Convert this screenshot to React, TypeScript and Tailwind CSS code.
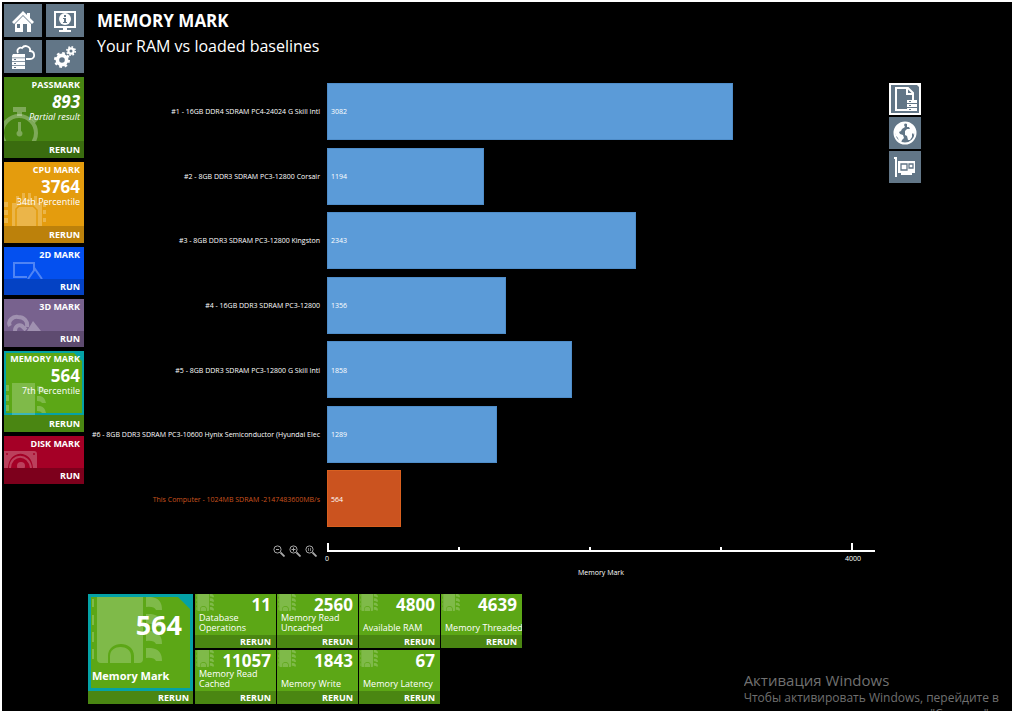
import type { ReactNode } from 'react';

const marks = [
  { title: 'PASSMARK', score: '893', note: 'Partial result', action: 'RERUN', bg: 'bg-[#478512]', foot: 'bg-[#3a6c0f]', icon: <StopwatchArt />, italic: true },
  { title: 'CPU MARK', score: '3764', note: '34th Percentile', action: 'RERUN', bg: 'bg-[#e49c0d]', foot: 'bg-[#bc810b]', icon: <CpuArt /> },
  { title: '2D MARK', action: 'RUN', bg: 'bg-[#0450ef]', foot: 'bg-[#0442c4]', icon: <Shapes2dArt /> },
  { title: '3D MARK', action: 'RUN', bg: 'bg-[#78628e]', foot: 'bg-[#5e4b70]', icon: <Shapes3dArt /> },
  { title: 'MEMORY MARK', score: '564', note: '7th Percentile', action: 'RERUN', bg: 'bg-[#5ca716]', foot: 'bg-[#4a8612]', icon: <MemoryArt />, selected: true },
  { title: 'DISK MARK', action: 'RUN', bg: 'bg-[#a50026]', foot: 'bg-[#7d001c]', icon: <DiskArt /> },
];

const baselines = [
  { label: '#1 - 16GB DDR4 SDRAM PC4-24024 G Skill Intl', value: 3082 },
  { label: '#2 - 8GB DDR3 SDRAM PC3-12800 Corsair', value: 1194 },
  { label: '#3 - 8GB DDR3 SDRAM PC3-12800 Kingston', value: 2343 },
  { label: '#4 - 16GB DDR3 SDRAM PC3-12800', value: 1356 },
  { label: '#5 - 8GB DDR3 SDRAM PC3-12800 G Skill Intl', value: 1858 },
  { label: '#6 - 8GB DDR3 SDRAM PC3-10600 Hynix Semiconductor (Hyundai Elec', value: 1289 },
  { label: 'This Computer - 1024MB SDRAM -2147483600MB/s', value: 564, own: true },
];

const AXIS_MAX = 4160;

const tests = [
  { name: 'Database\nOperations', score: '11' },
  { name: 'Memory Read\nUncached', score: '2560' },
  { name: 'Available RAM', score: '4800' },
  { name: 'Memory Threaded', score: '4639' },
  { name: 'Memory Read\nCached', score: '11057' },
  { name: 'Memory Write', score: '1843' },
  { name: 'Memory Latency', score: '67' },
];

function StopwatchArt() {
  return (
    <svg viewBox="0 0 36 34" className="absolute bottom-0 left-0 h-[34px] w-[36px] text-white/30">
      <path d="M9 0h13v5h-4v4h-5V5H9z" fill="currentColor" />
      <circle cx="15" cy="26" r="17" fill="none" stroke="currentColor" strokeWidth="4" />
      <path d="M27 12l3-3 4 4-3 3z" fill="currentColor" />
      <path d="M14 15h3v9a3 3 0 1 1-3 0z" fill="currentColor" />
    </svg>
  );
}

function CpuArt() {
  return (
    <svg viewBox="0 0 42 34" className="absolute bottom-0 left-0 h-[34px] w-[42px] text-white/25" fill="currentColor">
      <path d="M8 11h30v23H8zM12 4h3v7h-3zM18 1h3v10h-3zM24 1h3v10h-3zM30 4h3v7h-3zM0 10h4v5H0zM0 18h4v5H0zM0 26h4v5H0zM39 11h3v4h-3zM39 18h3v4h-3zM39 26h3v4h-3z" />
      <path d="M12 34V17l3-3h14l4 4v16" fill="none" stroke="#e49c0d" strokeWidth="1.500" />
    </svg>
  );
}

function Shapes2dArt() {
  return (
    <svg viewBox="0 0 36 17" className="absolute bottom-0 left-[4px] h-[17px] w-[36px] text-white/30" fill="none" stroke="currentColor" strokeWidth="2">
      <path d="M19 15H6V1h20v8M20 17l7-10 7 10" />
    </svg>
  );
}

function Shapes3dArt() {
  return (
    <svg viewBox="0 0 36 17" className="absolute bottom-0 left-[3px] h-[17px] w-[36px] text-white/30" fill="none" stroke="currentColor" strokeWidth="4">
      <path d="M3 12C0 7 6 2 11 3c6 0 10 4 9 10" />
      <path d="M8 17c0-5 4-7 7-5l4 4" />
      <path d="M26 7l8 10H20z" fill="currentColor" stroke="none" />
    </svg>
  );
}

function MemoryArt() {
  return (
    <svg viewBox="0 0 42 32" className="absolute bottom-0 left-0 h-8 w-[42px] text-white/22" fill="currentColor">
      <path d="M8 0h23v32H8zM2 2h3v6H2zM2 12h3v6H2zM2 22h3v6H2z" />
      <path d="M33 3h3q5 1 6 7h-4q-1-2-5-2zM33 13h3q5 1 6 7h-4q-1-2-5-2zM33 23h3q5 1 6 7h-4q-1-2-5-2z" />
    </svg>
  );
}

function DiskArt() {
  return (
    <svg viewBox="0 0 36 17" className="absolute bottom-0 left-0 h-[17px] w-[36px] text-white/25">
      <path d="M0 0h30q3 0 3 3v14h-4C28-2 5-2 4 17H0z" fill="currentColor" />
      <path d="M6 17C7 2 25 2 27 17" fill="none" stroke="currentColor" strokeWidth="2" />
      <circle cx="17" cy="15" r="4" fill="currentColor" />
      <circle cx="3" cy="3" r="1" fill="#a50026" />
      <circle cx="30" cy="3" r="1" fill="#a50026" />
    </svg>
  );
}

function ChipArt({ className }: { className: string }) {
  return (
    <svg viewBox="0 0 70 68" preserveAspectRatio="xMinYMin slice" className={`absolute text-white/22 ${className}`} fill="currentColor">
      <path d="M5 0h46v62q0 4-4 4h-5V59c0-16-26-16-26 0v7H9q-4 0-4-4z" />
      <path d="M18 66V59c0-12 21-12 21 0v7z" />
      <path d="M0 2h2v8H0zM0 18h2v10H0zM0 35h2v10H0zM0 52h2v10H0z" />
      <path d="M54 0h5q11 1 11 13h-6q-2-4-10-3zM54 17h5q11 1 11 13h-6q-2-4-10-3zM54 34h5q11 1 11 13h-6q-2-4-10-3zM54 51h5q11 1 11 13h-6q-2-4-10-3z" />
    </svg>
  );
}

function HomeIcon() {
  return (
    <svg viewBox="0 0 24 24" className="h-6 w-6" fill="#fff">
      <path d="M12 2L1 13l2 2 9-9 9 9 2-2-4-4V4h-3v2z" />
      <path d="M4 15l8-8 8 8v8h-4v-8h-4v8H4z" />
      <path d="M6 15h3v4H6z" fill="#627687" />
    </svg>
  );
}

function SystemIcon() {
  return (
    <svg viewBox="0 0 24 24" className="h-6 w-6" fill="#fff">
      <path d="M1 2h22v17H1zm2 2v13h18V4z" fillRule="evenodd" />
      <path d="M10 19h4v2h4v2H6v-2h4z" />
      <circle cx="12" cy="10" r="6" />
      <path d="M11 6h2v2h-2zM10 9h3v4h1v1h-4v-1h1v-3h-1z" fill="#627687" />
    </svg>
  );
}

function BaselineIcon() {
  return (
    <svg viewBox="0 0 24 24" className="h-6 w-6">
      <path d="M7 8C5 4 9 2 11 3c3-4 9-1 8 3 5 0 6 8 0 8h-4" fill="none" stroke="#fff" strokeWidth="1.800" />
      <path d="M2 9h12v15H1V11z" fill="#fff" />
      <path d="M1 12.500h13v.8H1zM1 16h13v.8H1zM1 20h13v.8H1zM3 14h2v1H3zM3 18h2v1H3zM3 22h2v1H3z" fill="#627687" />
    </svg>
  );
}

function GearsIcon() {
  return (
    <svg viewBox="0 0 24 24" className="h-6 w-6" fill="none" stroke="#fff">
      <circle cx="9" cy="15" r="4.600" strokeWidth="3.600" />
      <circle cx="9" cy="15" r="6.800" strokeWidth="2.400" strokeDasharray="2.670 2.670" />
      <circle cx="18" cy="6" r="2.600" strokeWidth="2.200" />
      <circle cx="18" cy="6" r="4.200" strokeWidth="1.600" strokeDasharray="1.650 1.650" />
    </svg>
  );
}

function BaselineFileIcon() {
  return (
    <svg viewBox="0 0 28 28" className="h-7 w-7">
      <path d="M16 25H5V3h12l5 5v7M16 3v6h6" fill="none" stroke="#fff" strokeWidth="2" />
      <path d="M16 15h10v11H16z" fill="#fff" />
      <path d="M18 16h2v1h-2zM18 20h2v1h-2zM18 24h2v1h-2zM16 18h10v1H16zM16 22h10v1H16z" fill="#627687" />
    </svg>
  );
}

function GlobeIcon() {
  return (
    <svg viewBox="0 0 28 28" className="h-7 w-7">
      <circle cx="14" cy="14" r="10.500" fill="none" stroke="#fff" strokeWidth="2" />
      <path d="M4 12c1-5 5-8 10-8l-1 2 1 2-3 2-1 2-2 1 1 2 3 1 1 3-2 2-1 3-2-1-1-4-2-2-1-3z" fill="#fff" />
      <path d="M16 5l3 0 4 4 1 5-1 2-1-2-1 1 0 3-2 3-2 0-1-4-2-1 0-4 2-2 3 0-1-2-2 0z" fill="#fff" />
    </svg>
  );
}

function CardIcon() {
  return (
    <svg viewBox="0 0 28 28" className="h-7 w-7">
      <path d="M3 4h3v20H4V6H3zM7 8h17v12h-3v2H10v-2H7z" fill="#fff" />
      <path d="M10 11h6v6h-6zM18 11h4v4h-4z" fill="none" stroke="#627687" strokeWidth="1.300" />
    </svg>
  );
}

function ZoomIcon({ sign }: { sign: ReactNode }) {
  return (
    <svg viewBox="0 0 12 12" className="h-3 w-3" fill="none" stroke="#a8a8a8">
      <circle cx="4.500" cy="4.500" r="3.600" />
      <path d="M7.500 7.500l4 4" strokeWidth="1.800" />
      {sign}
    </svg>
  );
}

const navItems = [
  { name: 'Home', icon: <HomeIcon /> },
  { name: 'System information', icon: <SystemIcon /> },
  { name: 'Manage baselines', icon: <BaselineIcon /> },
  { name: 'Preferences', icon: <GearsIcon /> },
];

const views = [
  { name: 'Loaded baselines', icon: <BaselineFileIcon />, active: true },
  { name: 'World comparison', icon: <GlobeIcon /> },
  { name: 'Same hardware', icon: <CardIcon /> },
];

const zooms = [
  { name: 'Zoom out', sign: <path d="M3 4.500h3" /> },
  { name: 'Zoom in', sign: <path d="M2.500 4.500h4M4.500 2.500v4" /> },
  { name: 'Reset zoom', sign: <path d="M3.500 3v3M5.500 3v3" strokeWidth=".7" /> },
];

const Corner = () => (
  <svg viewBox="0 0 12 12" className="absolute top-0 right-0 h-3 w-3">
    <path d="M0 0h12v12z" fill="#04a2a6" />
  </svg>
);

const Sidebar = () => (
  <aside className="w-20 shrink-0">
    <nav className="grid grid-cols-2 gap-x-1 gap-y-[3px]">
      {navItems.map((item) => (
        <button key={item.name} aria-label={item.name} className="flex h-[33px] items-center justify-center bg-[#627687]">
          {item.icon}
        </button>
      ))}
    </nav>
    <div className="mt-1 flex flex-col gap-1">
      {marks.map((mark) => (
        <section key={mark.title} className="text-right text-white">
          <div
            className={`relative overflow-hidden ${mark.bg} ${mark.score ? 'h-16' : 'h-8'} ${
              mark.selected ? 'outline-2 -outline-offset-2 outline-[#04a2a6]' : ''
            }`}
          >
            {mark.icon}
            {mark.selected && <Corner />}
            <div className="relative pr-1">
              <h2 className="text-[9px] leading-4 font-bold whitespace-nowrap">{mark.title}</h2>
              {mark.score && (
                <p className={`text-[17px] leading-[18px] font-bold ${mark.italic ? 'italic' : ''}`}>{mark.score}</p>
              )}
              {mark.note && (
                <p className={`text-[9px] leading-3 whitespace-nowrap ${mark.italic ? 'italic' : ''}`}>{mark.note}</p>
              )}
            </div>
          </div>
          <button className={`block w-full pr-1 text-right text-[9px] font-bold ${mark.foot} ${mark.score ? 'h-[17px]' : 'h-4'}`}>
            {mark.action}
          </button>
        </section>
      ))}
    </div>
  </aside>
);

const Chart = () => (
  <div className="min-w-0 flex-1 text-[7px] text-white">
    <div className="grid h-[452px] grid-rows-7">
      {baselines.map((row) => (
        <div key={row.label} className="flex items-start">
          <div className={`flex h-[57px] w-[239px] shrink-0 items-center justify-end pt-[2px] pr-[7px] whitespace-nowrap ${row.own ? 'text-[#cb531f]' : ''}`}>
            {row.label}
          </div>
          <div className="flex-1">
            <div
              className={`flex h-[57px] items-center border pt-[2px] pl-[3px] ${
                row.own ? 'border-[#d9601f] bg-[#cb531f]' : 'border-[#4f8dc9] bg-[#5b9bd8]'
              }`}
              style={{ width: `${(row.value / AXIS_MAX) * 100}%` }}
            >
              {row.value}
            </div>
          </div>
        </div>
      ))}
    </div>
    <div className="mt-2 flex">
      <div className="flex w-[239px] shrink-0 justify-end gap-1 pr-[10px]">
        {zooms.map((z) => (
          <button key={z.name} aria-label={z.name} className="h-4">
            <ZoomIcon sign={z.sign} />
          </button>
        ))}
      </div>
      <div className="flex-1">
        <div className="flex h-[9px] items-end border-b-2 border-white">
          <div className="flex h-full w-[96%] items-end justify-between">
            <span className="h-full w-[2px] bg-white" />
            <span className="h-[3px] w-[2px] bg-white" />
            <span className="h-[3px] w-[2px] bg-white" />
            <span className="h-[3px] w-[2px] bg-white" />
            <span className="h-full w-[2px] bg-white" />
          </div>
        </div>
        <div className="flex w-[96%] justify-between leading-[14px]">
          <span className="-ml-[2px]">0</span>
          <span className="-mr-[8px]">4000</span>
        </div>
        <p className="text-center leading-[14px]">Memory Mark</p>
      </div>
    </div>
  </div>
);

const ViewSwitch = () => (
  <div className="flex w-8 shrink-0 flex-col gap-[2px]">
    {views.map((view) => (
      <button
        key={view.name}
        aria-label={view.name}
        className={`relative flex h-8 items-center justify-center bg-[#627687] ${
          view.active ? 'outline-2 -outline-offset-2 outline-white' : ''
        }`}
      >
        {view.icon}
        {view.active && (
          <svg viewBox="0 0 6 6" className="absolute top-0 right-0 h-[6px] w-[6px]">
            <path d="M0 0h6v6z" fill="#fff" />
          </svg>
        )}
      </button>
    ))}
  </div>
);

const Tests = () => (
  <div className="flex gap-[2px] text-white">
    <section className="w-[105px] shrink-0">
      <div className="relative flex h-[97px] flex-col justify-between overflow-hidden border-3 border-[#04a2a6] bg-[#5ca716]">
        <ChipArt className="top-0 left-[1px] h-[68px] w-[70px]" />
        <Corner />
        <p className="relative pt-3 pr-2 text-right text-[27px] leading-8 font-bold">564</p>
        <h2 className="relative px-px pb-1 text-[11px] leading-4 font-bold">Memory Mark</h2>
      </div>
      <button className="block h-[13px] w-full bg-[#4a8612] pr-1 text-right text-[9px] leading-[13px] font-bold">RERUN</button>
    </section>
    <div className="grid grid-cols-[repeat(4,81px)] content-start gap-x-px gap-y-[2px]">
      {tests.map((test) => (
        <section key={test.name}>
          <div className="relative flex h-[41px] flex-col justify-between overflow-hidden bg-[#5ca716]">
            <ChipArt className="top-0 left-[1px] h-[17px] w-[18px]" />
            <p className="relative pt-[3px] pr-[5px] text-right text-[17px] leading-4 font-bold">{test.score}</p>
            <h3 className="relative pb-[2px] pl-1 text-[9px] leading-[10px] whitespace-pre">{test.name}</h3>
          </div>
          <button className="block h-[13px] w-full bg-[#4a8612] pr-[5px] text-right text-[9px] leading-[13px] font-bold">RERUN</button>
        </section>
      ))}
    </div>
  </div>
);

export default function App() {
  return (
    <div className="h-screen overflow-hidden bg-white p-[2px] font-['Open_Sans','Noto_Sans',sans-serif]">
      <div className="relative flex h-full gap-1 overflow-hidden bg-black p-[2px]">
        <Sidebar />
        <main className="min-w-0 flex-1">
          <header className="px-[9px] pt-[5px] text-white">
            <h1 className="text-[17px] leading-6 font-bold">MEMORY MARK</h1>
            <p className="text-[16px] leading-[26px]">Your RAM vs loaded baselines</p>
          </header>
          <div className="mt-6 flex gap-[14px] pr-[89px]">
            <Chart />
            <ViewSwitch />
          </div>
          <div className="mt-[14px]">
            <Tests />
          </div>
        </main>
        <div className="absolute right-[13px] bottom-0 h-[41px] overflow-hidden text-[#707070]">
          <p className="text-[15px] leading-5">Активация Windows</p>
          <p className="text-[12px] leading-4">
            Чтобы активировать Windows, перейдите в
            <br />
            компонент панели управления "Система".
          </p>
        </div>
      </div>
    </div>
  );
}
